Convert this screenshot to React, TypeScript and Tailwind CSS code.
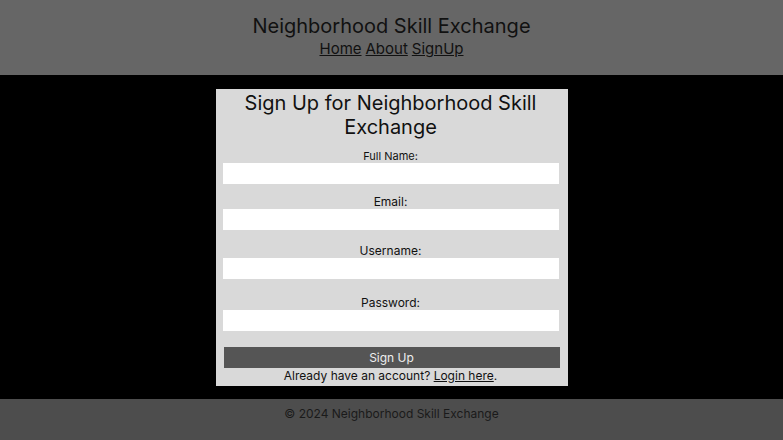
export default function App() {
  return (
    <div className="flex min-h-[440px] flex-col bg-black font-['Inter','Noto_Sans',sans-serif] text-[#111]">
      <header className="h-[75px] bg-[#666666] pt-[14px] text-center">
        <h1 className="text-[20px] leading-[24px]">Neighborhood Skill Exchange</h1>
        <nav className="mt-[1px] flex justify-center gap-[4px] text-[15px] leading-[20px]">
          <a className="underline">Home</a>
          <a className="underline">About</a>
          <a className="underline">SignUp</a>
        </nav>
      </header>

      <main className="flex justify-center pt-[14px] pb-[13px]">
        <div className="h-[297px] w-[352px] bg-[#d9d9d9] pt-[2px] pr-[9px] pl-[7px] text-center">
          <h2 className="text-[20px] leading-[24px]">Sign Up for Neighborhood Skill Exchange</h2>
          <form className="flex flex-col">
            <label className="mt-[10px] block text-[11px] leading-[14px]">Full Name:</label>
            <input className="h-[21px] w-full bg-white outline-none" />
            <label className="mt-[10px] block text-[12px] leading-[15px]">Email:</label>
            <input className="h-[21px] w-full bg-white outline-none" />
            <label className="mt-[13px] block text-[12px] leading-[15px]">Username:</label>
            <input className="h-[21px] w-full bg-white outline-none" />
            <label className="mt-[16px] block text-[12px] leading-[15px]">Password:</label>
            <input type="password" className="h-[21px] w-full bg-white outline-none" />
            <button type="button" className="mt-[16px] ml-[1px] h-[21px] w-full bg-[#555555] text-[12px] text-[#eeeeee]">
              Sign Up
            </button>
          </form>
          <p className="text-[12px] leading-[16px]">
            Already have an account? <a className="underline">Login here</a>.
          </p>
        </div>
      </main>

      <footer className="h-[41px] bg-[#4d4d4d] pt-[7px] text-center text-[12px] leading-[16px] text-[#1a1a1a]">
        © 2024 Neighborhood Skill Exchange
      </footer>
    </div>
  );
}
